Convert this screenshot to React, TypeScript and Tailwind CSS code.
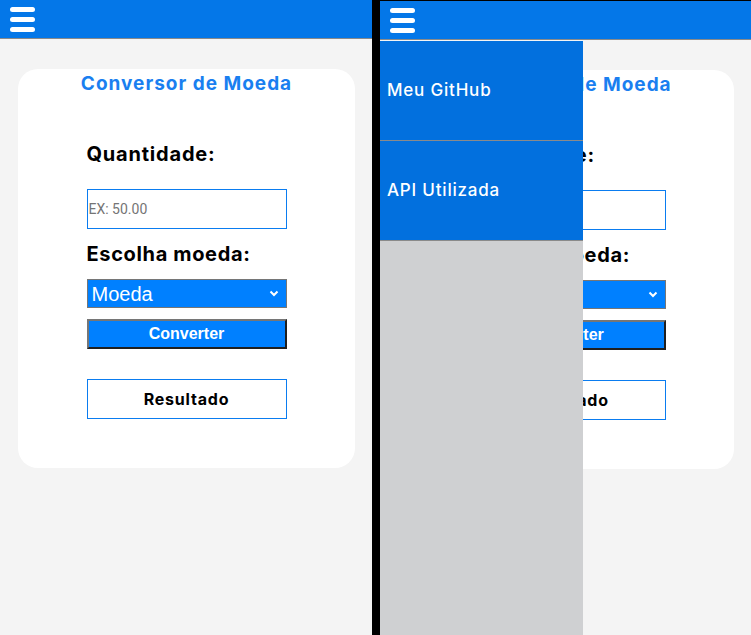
import React from "react";

const poppins = { fontFamily: "Inter, 'Noto Sans', sans-serif" };

function Burger() {
  return (
    <div className="flex flex-col gap-[5px] w-[25px]">
      <div className="h-[5px] w-[25px] rounded-full bg-white" />
      <div className="h-[5px] w-[25px] rounded-full bg-white" />
      <div className="h-[5px] w-[25px] rounded-full bg-white" />
    </div>
  );
}

function Pane({ drawer }: { drawer?: boolean }) {
  return (
    <div className="relative flex h-full flex-col bg-[#f4f4f4] overflow-hidden" style={poppins}>
      <div className="flex h-[39px] shrink-0 items-center border-b border-[#8a8a8a] bg-[#0477e8] pl-[10px]">
        <Burger />
      </div>
      <div className="ml-[18px] mr-[17px] mt-[30px] flex h-[399px] flex-col items-center rounded-[20px] bg-white">
        <h1 className="mt-[3px] text-[19px] font-bold leading-[24px] tracking-[1px] text-[#1a7ff0]">Conversor de Moeda</h1>
        <div className="mt-[44px] flex w-[200px] flex-col">
          <label className="text-[20px] font-bold leading-[28px] tracking-[0.8px] text-black">Quantidade:</label>
          <div className="mt-[21px] flex h-[40px] items-center border border-[#0a7cf0] pl-[1px]">
            <span className="text-[14px] text-[#757575]" style={{ fontFamily: "Roboto, sans-serif" }}>EX: 50.00</span>
          </div>
          <label className="mt-[11px] text-[20px] font-bold leading-[28px] tracking-[0.65px] text-black">Escolha moeda:</label>
          <div className="mt-[11px] flex h-[29px] items-center justify-between border border-[#767676] bg-[#0080ff] pl-[4px] pr-[7px]">
            <span className="text-[20px] leading-none text-white" style={{ fontFamily: "'Liberation Sans', Arial, sans-serif" }}>Moeda</span>
            <svg width="10" height="7" viewBox="0 0 10 7">
              <path d="M1.5 1.5 L5 5 L8.5 1.5" stroke="white" strokeWidth="2" fill="none" />
            </svg>
          </div>
          <div
            className="mt-[11px] flex h-[30px] items-center justify-center border-2 border-t-[#767676] border-l-[#767676] border-b-[#1f1f1f] border-r-[#1f1f1f] bg-[#0080ff] text-[16px] font-bold text-white"
            style={{ fontFamily: "'Liberation Sans', Arial, sans-serif" }}
          >
            Converter
          </div>
          <div className="mt-[30px] flex h-[40px] items-center justify-center border border-[#0a7cf0] text-[16px] font-bold tracking-[0.8px] text-black">
            Resultado
          </div>
        </div>
      </div>
      {drawer && (
        <div className="absolute left-0 top-[40px] bottom-0 flex w-[203px] flex-col bg-[#cfd0d2]">
          <div className="flex h-[100px] items-center border-b border-[#8a8a8a] bg-[#0270de] pl-[7px] text-[17px] font-medium tracking-[0.8px] text-white">
            Meu GitHub
          </div>
          <div className="flex h-[100px] items-center border-b border-[#8a8a8a] bg-[#0270de] pl-[7px] text-[17px] font-medium tracking-[0.8px] text-white">
            API Utilizada
          </div>
        </div>
      )}
    </div>
  );
}

export default function App() {
  return (
    <div className="flex h-[635px] w-[751px] bg-black">
      <div className="h-full w-[372px]">
        <Pane />
      </div>
      <div className="ml-[8px] mt-[1px] h-[634px] w-[371px]">
        <Pane drawer />
      </div>
    </div>
  );
}
